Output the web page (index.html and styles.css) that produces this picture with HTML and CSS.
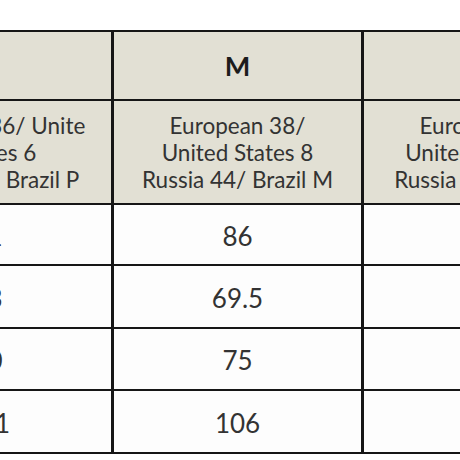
FILE: index.html
```html
<!DOCTYPE html>
<html lang="en">
<head>
<meta charset="utf-8">
<title>Size chart</title>
<link rel="stylesheet" href="styles.css">
</head>
<body>
<div class="chart">
  <div class="cell head">S</div>
  <div class="cell head">M</div>
  <div class="cell head">L</div>

  <div class="cell desc">European 36/ Unite<br>d States 6<br>Russia 42/ Brazil P</div>
  <div class="cell desc">European 38/<br>United States 8<br>Russia 44/ Brazil M</div>
  <div class="cell desc">European 40/<br>United States 10<br>Russia 46/ Brazil G</div>

  <div class="cell val">81</div>
  <div class="cell val">86</div>
  <div class="cell val">91</div>

  <div class="cell val">63</div>
  <div class="cell val">69.5</div>
  <div class="cell val">72</div>

  <div class="cell val">70</div>
  <div class="cell val">75</div>
  <div class="cell val">80</div>

  <div class="cell val">101</div>
  <div class="cell val">106</div>
  <div class="cell val">111</div>
</div>
</body>
</html>
```

FILE: styles.css
```css
html, body {
  margin: 0;
  padding: 0;
  background: #ffffff;
  overflow: hidden;
}

body {
  width: 460px;
  height: 460px;
  font-family: Lato, "Liberation Sans", sans-serif;
  color: #333333;
}

.chart {
  margin-top: 30px;
  margin-left: -136px;
  width: 747px;
  display: grid;
  grid-template-columns: 247px 247px 247px;
  grid-template-rows: 67px 102px 59px 61px 60px 61px;
  column-gap: 3px;
  row-gap: 2px;
  padding: 2px 0;
  background: #161616;
}

.cell {
  display: flex;
  align-items: center;
  justify-content: center;
  text-align: center;
  background: #fdfdfd;
}

.head {
  background: #e2e0d4;
  font-weight: 700;
  font-size: 27px;
  color: #1c1c1c;
}

.desc {
  background: #e2e0d4;
  font-size: 22.5px;
  line-height: 27px;
  padding-top: 1px;
  box-sizing: border-box;
}

.val {
  font-size: 26px;
  padding-top: 2px;
  box-sizing: border-box;
}
```
